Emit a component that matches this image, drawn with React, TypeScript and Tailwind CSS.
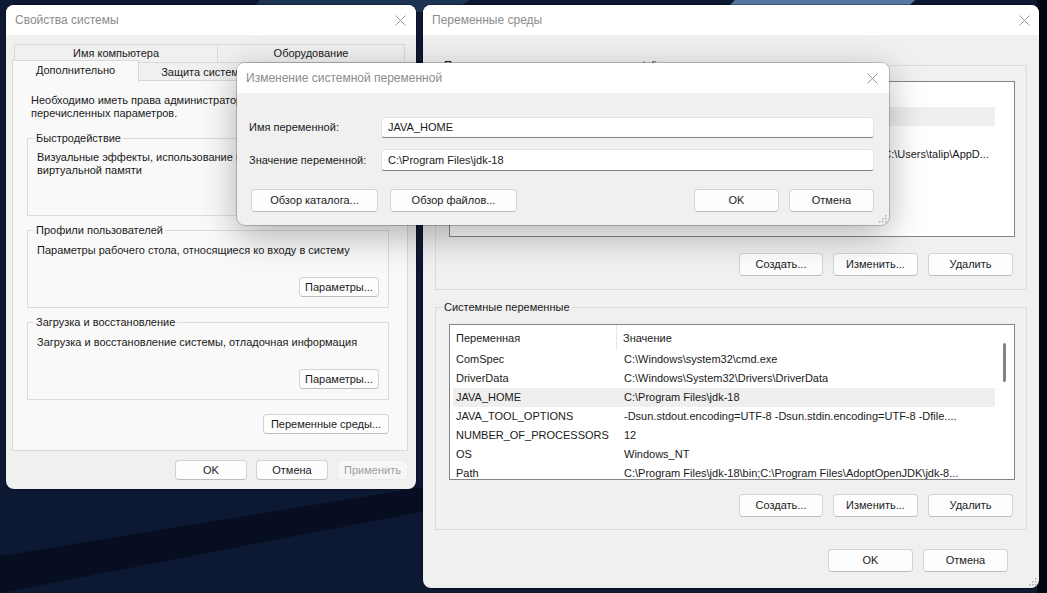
import React from "react";

function CloseX() {
  return (
    <svg width="11" height="11" viewBox="0 0 11 11" className="shrink-0">
      <path d="M0.5 0.5L10.5 10.5M10.5 0.5L0.5 10.5" stroke="#9a9a9a" strokeWidth="1" />
    </svg>
  );
}

function Grip() {
  const dots = [
    [7, 1],
    [7, 4],
    [4, 4],
    [7, 7],
    [4, 7],
    [1, 7],
  ];
  return (
    <svg width="9" height="9" viewBox="0 0 9 9">
      {dots.map(([x, y], i) => (
        <rect key={i} x={x} y={y} width="1.5" height="1.5" fill="#b0b0b0" />
      ))}
    </svg>
  );
}

function TitleBar({ title, padR }: { title: string; padR: string }) {
  return (
    <div className={"flex h-[30px] shrink-0 items-center justify-between bg-white pl-[9px] " + padR}>
      <span className="text-[12px] text-[#8c8c8c]">{title}</span>
      <CloseX />
    </div>
  );
}

function Btn({ children, cls, disabled = false }: { children: React.ReactNode; cls: string; disabled?: boolean }) {
  return (
    <div
      className={
        "flex shrink-0 items-center justify-center rounded-[4px] border " +
        (disabled
          ? "border-[#ececec] bg-[#f6f6f6] text-[#9e9e9e] "
          : "border-[#d3d3d3] border-b-[#bdbdbd] bg-[#fdfdfd] text-[#1b1b1b] ") +
        cls
      }
    >
      {children}
    </div>
  );
}

type Row = { name: string; value: string; sel?: boolean; endAlign?: boolean };

function ListBox({ rows, thumb }: { rows: Row[]; thumb: boolean }) {
  return (
    <div className="ml-[13px] flex h-[156px] w-[566px] overflow-hidden border border-[#858585] bg-white">
      <div className="flex w-[545px] flex-col">
        <div className="flex h-[25px] shrink-0 items-center">
          <div className="flex h-full w-[167px] items-center border-r border-[#e5e5e5] pl-[6px] pt-[1px]">Переменная</div>
          <div className="pl-[6px] pt-[1px]">Значение</div>
        </div>
        {rows.map((r, i) => (
          <div
            key={i}
            className={
              "ml-[3px] flex h-[19px] shrink-0 items-center " + (r.sel ? "bg-[#efefef]" : "bg-white")
            }
          >
            <div className="w-[168px] shrink-0 whitespace-nowrap pl-[3px]">{r.name}</div>
            <div
              className={
                "flex min-w-0 flex-1 overflow-hidden whitespace-nowrap pl-[3px] " +
                (r.endAlign ? "justify-end pr-[6px]" : "")
              }
            >
              <span className="shrink-0">{r.value}</span>
            </div>
          </div>
        ))}
      </div>
      <div className="flex w-[19px] flex-col pl-[8px] pt-[18px]">
        {thumb && <div className="h-[39px] w-[3px] rounded-full bg-[#858585]" />}
      </div>
    </div>
  );
}

const userRows: Row[] = [
  { name: "OneDrive", value: "C:\\Users\\talip\\OneDrive", sel: true },
  { name: "OneDriveConsumer", value: "C:\\Users\\talip\\OneDrive" },
  {
    name: "Path",
    value: "C:\\Users\\talip\\AppData\\Local\\Microsoft\\WindowsApps;C:\\Users\\talip\\AppD...",
    endAlign: true,
  },
  { name: "TEMP", value: "C:\\Users\\talip\\AppData\\Local\\Temp" },
  { name: "TMP", value: "C:\\Users\\talip\\AppData\\Local\\Temp" },
];

const sysRows: Row[] = [
  { name: "ComSpec", value: "C:\\Windows\\system32\\cmd.exe" },
  { name: "DriverData", value: "C:\\Windows\\System32\\Drivers\\DriverData" },
  { name: "JAVA_HOME", value: "C:\\Program Files\\jdk-18", sel: true },
  { name: "JAVA_TOOL_OPTIONS", value: "-Dsun.stdout.encoding=UTF-8 -Dsun.stdin.encoding=UTF-8 -Dfile...." },
  { name: "NUMBER_OF_PROCESSORS", value: "12" },
  { name: "OS", value: "Windows_NT" },
  { name: "Path", value: "C:\\Program Files\\jdk-18\\bin;C:\\Program Files\\AdoptOpenJDK\\jdk-8..." },
];

export default function App() {
  return (
    <div className="relative h-[593px] w-[1047px] overflow-hidden bg-[#0c1732] font-['Liberation_Sans',Arial,sans-serif] text-[11px] leading-[13px] text-[#1a1a1a]">
      {/* wallpaper */}
      <svg className="absolute inset-0" width="1047" height="593" viewBox="0 0 1047 593">
        <rect x="0" y="0" width="1047" height="593" fill="#0d1933" />
        <polygon points="260,0 470,0 450,12 250,12" fill="#1d3354" />
        <polygon points="735,0 915,0 905,10 725,10" fill="#56789f" />
        <polygon points="0,556 430,486 430,510 0,593" fill="#070e21" />
        <rect x="1037" y="0" width="10" height="593" fill="#03070f" />
      </svg>

      {/* Window 1: Свойства системы */}
      <div className="absolute left-[6px] top-[5px] flex h-[484px] w-[410px] flex-col overflow-hidden rounded-[8px] bg-[#f0f0f0] shadow-[0_0_0_1px_rgba(0,0,0,0.3)]">
        <TitleBar title="Свойства системы" padR="pr-[10px]" />
        <div className="flex flex-1 flex-col pl-[6px] pt-[9px]">
          <div className="flex h-[18px] pl-[2px]">
            <div className="flex w-[204px] items-center justify-center border border-b-0 border-[#d9d9d9]">Имя компьютера</div>
            <div className="flex w-[187px] items-center justify-center border border-b-0 border-l-0 border-[#d9d9d9]">Оборудование</div>
          </div>
          <div className="flex h-[18px] items-start border-t border-[#d9d9d9]">
            <div className="relative z-10 -mt-[3px] flex h-[22px] w-[127px] items-center justify-center border border-b-0 border-[#d9d9d9] bg-[#f9f9f9] pb-[2px]">
              Дополнительно
            </div>
            <div className="flex h-[18px] w-[127px] items-center justify-center border-r border-[#d9d9d9] pl-[4px] pt-[1px]">Защита системы</div>
            <div className="flex h-[18px] w-[139px] items-center justify-center border-r border-[#d9d9d9] pt-[1px]">Удаленный доступ</div>
          </div>
          <div className="flex h-[371px] w-[396px] flex-col border border-[#d9d9d9] bg-[#f9f9f9] pt-[13px]">
            <div className="pl-[18px]">
              <div>Необходимо иметь права администратора для изменения большинства</div>
              <div>перечисленных параметров.</div>
            </div>
            <fieldset className="ml-[14px] mt-[12px] w-[362px] border border-[#dcdcdc]">
              <legend className="ml-[6px] px-[2px] leading-[13px]">Быстродействие</legend>
              <div className="h-[70px] pl-[9px] pt-[6px]">
                <div className="whitespace-nowrap">Визуальные эффекты, использование процессора, оперативной и</div>
                <div>виртуальной памяти</div>
              </div>
            </fieldset>
            <fieldset className="ml-[14px] mt-[8px] w-[362px] border border-[#dcdcdc]">
              <legend className="ml-[6px] px-[2px] leading-[13px]">Профили пользователей</legend>
              <div className="flex h-[70px] flex-col pl-[9px] pr-[9px] pt-[7px]">
                <div>Параметры рабочего стола, относящиеся ко входу в систему</div>
                <div className="mt-[20px] flex justify-end">
                  <Btn cls="h-[20px] w-[80px]">Параметры...</Btn>
                </div>
              </div>
            </fieldset>
            <fieldset className="ml-[14px] mt-[8px] w-[362px] border border-[#dcdcdc]">
              <legend className="ml-[6px] px-[2px] leading-[13px]">Загрузка и восстановление</legend>
              <div className="flex h-[70px] flex-col pl-[9px] pr-[9px] pt-[7px]">
                <div>Загрузка и восстановление системы, отладочная информация</div>
                <div className="mt-[20px] flex justify-end">
                  <Btn cls="h-[20px] w-[80px]">Параметры...</Btn>
                </div>
              </div>
            </fieldset>
            <div className="mt-[14px] flex w-[376px] justify-end">
              <Btn cls="h-[20px] w-[126px]">Переменные среды...</Btn>
            </div>
          </div>
          <div className="flex justify-end gap-[9px] pr-[8px] pt-[9px]">
            <Btn cls="h-[20px] w-[72px]">OK</Btn>
            <Btn cls="h-[20px] w-[72px]">Отмена</Btn>
            <Btn cls="h-[20px] w-[71px]" disabled>
              Применить
            </Btn>
          </div>
        </div>
      </div>

      {/* Window 2: Переменные среды */}
      <div className="absolute left-[423px] top-[5px] flex h-[583px] w-[616px] flex-col overflow-hidden rounded-[8px] bg-[#f0f0f0] shadow-[0_0_0_1px_rgba(0,0,0,0.3)]">
        <TitleBar title="Переменные среды" padR="pr-[9px]" />
        <div className="relative flex flex-1 flex-col pl-[12px] pt-[24px]">
          <fieldset className="w-[592px] border border-[#dcdcdc]">
            <legend className="ml-[6px] px-[2px] leading-[13px]">Переменные среды пользователя для talip</legend>
            <div className="flex flex-col pt-[9px]">
              <ListBox rows={userRows} thumb={false} />
              <div className="flex justify-end gap-[10px] pb-[13px] pr-[13px] pt-[16px]">
                <Btn cls="h-[23px] w-[84px]">Создать...</Btn>
                <Btn cls="h-[23px] w-[85px]">Изменить...</Btn>
                <Btn cls="h-[23px] w-[85px]">Удалить</Btn>
              </div>
            </div>
          </fieldset>
          <fieldset className="mt-[11px] w-[592px] border border-[#dcdcdc]">
            <legend className="ml-[6px] px-[2px] leading-[13px]">Системные переменные</legend>
            <div className="flex flex-col pt-[10px]">
              <ListBox rows={sysRows} thumb={true} />
              <div className="flex justify-end gap-[10px] pb-[12px] pr-[13px] pt-[14px]">
                <Btn cls="h-[23px] w-[84px]">Создать...</Btn>
                <Btn cls="h-[23px] w-[85px]">Изменить...</Btn>
                <Btn cls="h-[23px] w-[85px]">Удалить</Btn>
              </div>
            </div>
          </fieldset>
          <div className="flex justify-end gap-[10px] pr-[31px] pt-[19px]">
            <Btn cls="h-[23px] w-[85px]">OK</Btn>
            <Btn cls="h-[23px] w-[85px]">Отмена</Btn>
          </div>
          <div className="absolute bottom-[2px] right-[2px]">
            <Grip />
          </div>
        </div>
      </div>

      {/* Window 3: Изменение системной переменной */}
      <div className="absolute left-[237px] top-[63px] flex h-[162px] w-[652px] flex-col overflow-hidden rounded-[8px] bg-[#f0f0f0] shadow-[0_0_0_1px_rgba(0,0,0,0.2),0_10px_36px_rgba(0,0,0,0.3)]">
        <TitleBar title="Изменение системной переменной" padR="pr-[11px]" />
        <div className="relative flex flex-1 flex-col pl-[12px] pr-[15px] pt-[24px]">
          <div className="flex items-center">
            <div className="w-[132px]">Имя переменной:</div>
            <div className="flex h-[21px] flex-1 items-center rounded-[3px] border border-[#e3e3e3] border-b-[#858585] bg-white pl-[6px]">
              JAVA_HOME
            </div>
          </div>
          <div className="mt-[11px] flex items-center">
            <div className="w-[132px]">Значение переменной:</div>
            <div className="flex h-[22px] flex-1 items-center rounded-[3px] border border-[#e3e3e3] border-b-[#858585] bg-white pl-[6px]">
              C:\Program Files\jdk-18
            </div>
          </div>
          <div className="mt-[18px] flex items-center">
            <Btn cls="ml-[2px] h-[23px] w-[127px]">Обзор каталога...</Btn>
            <Btn cls="ml-[12px] h-[23px] w-[127px]">Обзор файлов...</Btn>
            <div className="flex-1" />
            <Btn cls="h-[23px] w-[85px]">OK</Btn>
            <Btn cls="ml-[10px] h-[23px] w-[85px]">Отмена</Btn>
          </div>
          <div className="absolute bottom-[2px] right-[2px]">
            <Grip />
          </div>
        </div>
      </div>
    </div>
  );
}
